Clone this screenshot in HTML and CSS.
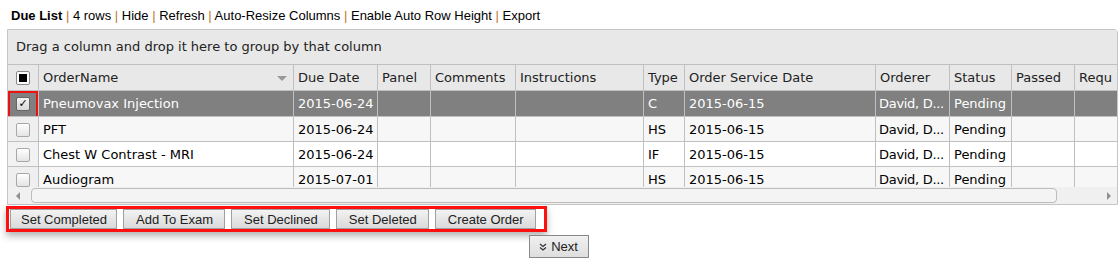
FILE: index.html
```html
<!DOCTYPE html>
<html>

<head>
    <meta charset="UTF-8">
    <title>Due List</title>
    <link rel="stylesheet" href="styles.css">
</head>

<body>
    <div class="page">
        <div class="toolbar">
            <b>Due List</b> <span class="sep">|</span> 4 rows <span class="sep">|</span> Hide <span class="sep">|</span>
            Refresh <span class="sep">|</span> Auto-Resize Columns <span class="sep">|</span> Enable Auto Row Height
            <span class="sep">|</span> Export
        </div>

        <div class="grid">
            <div class="group-panel">Drag a column and drop it here to group by that column</div>
            <div class="grid-content">
                <table class="grid-table">
                    <thead>
                        <tr>
                            <th class="col-chk"><span class="chk chk-all"></span></th>
                            <th class="col-name">OrderName<span class="sort-arrow"></span></th>
                            <th class="col-due">Due Date</th>
                            <th class="col-panel">Panel</th>
                            <th class="col-comments">Comments</th>
                            <th class="col-instr">Instructions</th>
                            <th class="col-type">Type</th>
                            <th class="col-osd">Order Service Date</th>
                            <th class="col-orderer">Orderer</th>
                            <th class="col-status">Status</th>
                            <th class="col-passed">Passed</th>
                            <th class="col-req">Requ</th>
                        </tr>
                    </thead>
                    <tbody>
                        <tr class="row-selected">
                            <td class="cell-chk">
                                <span class="chk chk-on">&#10003;</span>
                                <span class="highlight"></span>
                            </td>
                            <td>Pneumovax Injection</td>
                            <td>2015-06-24</td>
                            <td></td>
                            <td></td>
                            <td></td>
                            <td>C</td>
                            <td>2015-06-15</td>
                            <td class="cell-orderer">David, D...</td>
                            <td>Pending</td>
                            <td></td>
                            <td></td>
                        </tr>
                        <tr class="row-alt">
                            <td class="cell-chk"><span class="chk"></span></td>
                            <td>PFT</td>
                            <td>2015-06-24</td>
                            <td></td>
                            <td></td>
                            <td></td>
                            <td>HS</td>
                            <td>2015-06-15</td>
                            <td class="cell-orderer">David, D...</td>
                            <td>Pending</td>
                            <td></td>
                            <td></td>
                        </tr>
                        <tr>
                            <td class="cell-chk"><span class="chk"></span></td>
                            <td>Chest W Contrast - MRI</td>
                            <td>2015-06-24</td>
                            <td></td>
                            <td></td>
                            <td></td>
                            <td>IF</td>
                            <td>2015-06-15</td>
                            <td class="cell-orderer">David, D...</td>
                            <td>Pending</td>
                            <td></td>
                            <td></td>
                        </tr>
                        <tr class="row-alt">
                            <td class="cell-chk"><span class="chk"></span></td>
                            <td>Audiogram</td>
                            <td>2015-07-01</td>
                            <td></td>
                            <td></td>
                            <td></td>
                            <td>HS</td>
                            <td>2015-06-15</td>
                            <td class="cell-orderer">David, D...</td>
                            <td>Pending</td>
                            <td></td>
                            <td></td>
                        </tr>
                    </tbody>
                </table>
            </div>
            <div class="hscroll">
                <span class="arrow arrow-left"></span>
                <div class="thumb"></div>
                <span class="arrow arrow-right"></span>
            </div>
        </div>

        <div class="actions">
            <div class="action-box">
                <button class="btn">Set Completed</button>
                <button class="btn">Add To Exam</button>
                <button class="btn">Set Declined</button>
                <button class="btn">Set Deleted</button>
                <button class="btn">Create Order</button>
            </div>
        </div>

        <div class="pager">
            <button class="btn btn-next">
                <svg width="8" height="8" viewBox="0 0 8 8">
                    <polyline points="1,1 4,3.5 7,1" fill="none" stroke="#333" stroke-width="1.2" />
                    <polyline points="1,4.5 4,7 7,4.5" fill="none" stroke="#333" stroke-width="1.2" />
                </svg>
                Next
            </button>
        </div>
    </div>
</body>

</html>
```

FILE: styles.css
```css
body {
    margin: 0;
    padding: 0;
    background: #fff;
    color: #000;
    font-family: 'Liberation Sans', Arial, sans-serif;
    font-size: 13px;
}

.page {
    width: 1118px;
}

.toolbar {
    padding: 8px 0 0 11px;
    height: 16px;
    line-height: 16px;
    margin-bottom: 5px;
    white-space: nowrap;
}

.toolbar b {
    font-weight: bold;
}

.sep {
    color: #c0782b;
}

/* Grid */
.grid {
    box-sizing: border-box;
    width: 1111px;
    margin-left: 7px;
    border: 1px solid #c5c5c5;
    border-top-right-radius: 4px;
    overflow: hidden;
    font-family: 'DejaVu Sans', Verdana, sans-serif;
    font-size: 13px;
    color: #222;
}

.group-panel {
    height: 34px;
    line-height: 34px;
    padding-left: 8px;
    background: #e8e8e8;
    border-bottom: 1px solid #c0c0c0;
}

.grid-content {
    height: 122px;
    overflow: hidden;
}

.grid-table {
    table-layout: fixed;
    width: 1167px;
    border-collapse: separate;
    border-spacing: 0;
}

.grid-table th,
.grid-table td {
    box-sizing: border-box;
    padding: 0 3px 0 4px;
    border-right: 1px solid #c0c0c0;
    border-bottom: 1px solid #c0c0c0;
    white-space: nowrap;
    overflow: hidden;
    text-align: left;
    vertical-align: middle;
}

.grid-table th {
    height: 26px;
    background: #e8e8e8;
    font-weight: normal;
    color: #222;
}

.grid-table td {
    height: 25px;
    color: #000;
}

.grid-table tbody tr:first-child td {
    height: 26px;
}

.grid-table td.cell-orderer {
    padding: 0 0 0 3px;
    letter-spacing: -0.3px;
}

.col-chk { width: 31px; }
.col-name { width: 255px; position: relative; }
.col-due { width: 84px; }
.col-panel { width: 53px; }
.col-comments { width: 85px; }
.col-instr { width: 128px; }
.col-type { width: 41px; }
.col-osd { width: 191px; }
.col-orderer { width: 74px; }
.col-status { width: 62px; }
.col-passed { width: 63px; }
.col-req { width: 100px; }

.grid-table th.col-chk,
.grid-table td.cell-chk {
    padding: 0;
    text-align: center;
}

.cell-chk {
    background: #f2f2f2;
    position: relative;
}

.row-alt td {
    background: #f7f7f7;
}

.row-alt td.cell-chk {
    background: #efefef;
}

.row-selected td,
.row-selected td.cell-chk {
    background: #808080;
    color: #fff;
}

.sort-arrow {
    position: absolute;
    right: 6px;
    top: 11px;
    border-left: 5px solid transparent;
    border-right: 5px solid transparent;
    border-top: 5px solid #999;
}

/* Checkboxes */
.chk {
    display: inline-block;
    box-sizing: border-box;
    width: 14px;
    height: 14px;
    border: 1px solid #a8a8a8;
    border-radius: 2px;
    background: linear-gradient(#ffffff, #e4e4e4);
    vertical-align: middle;
    position: relative;
    font-size: 11px;
    line-height: 12px;
    text-align: center;
    color: #000;
}

.chk-all {
    background: #fff;
    border-color: #888;
}

.chk-all::after {
    content: '';
    position: absolute;
    left: 2px;
    top: 2px;
    width: 8px;
    height: 8px;
    background: #000;
}

.chk-on {
    background: linear-gradient(#f4f4f4, #d8d8d8);
    border-color: #666;
    font-family: 'DejaVu Sans', sans-serif;
    font-weight: bold;
}

.highlight {
    position: absolute;
    left: -1px;
    top: -1px;
    right: -1px;
    bottom: -3px;
    border: 3px solid #ee1111;
    box-shadow: 0 4px 6px rgba(0, 0, 0, 0.35);
}

/* Horizontal scrollbar */
.hscroll {
    height: 17px;
    background: #f0f0f0;
    display: flex;
    align-items: center;
    padding: 0 6px 0 5px;
    gap: 6px;
}

.arrow {
    width: 0;
    height: 0;
    border-top: 4px solid transparent;
    border-bottom: 4px solid transparent;
}

.arrow-left {
    border-right: 4px solid #909090;
    margin-left: 3px;
}

.arrow-right {
    border-left: 4px solid #909090;
    margin-left: 44px;
}

.thumb {
    box-sizing: border-box;
    width: 1030px;
    height: 15px;
    margin-left: 5px;
    border: 1px solid #bcbcbc;
    border-radius: 4px;
    background: #f4f4f4;
}

/* Action buttons */
.actions {
    margin: 1px 0 0 6px;
}

.action-box {
    display: inline-flex;
    gap: 6px;
    padding: 0 8px 0 1px;
    border: 3px solid #ff1010;
    box-shadow: 0 4px 7px rgba(0, 0, 0, 0.3);
}

.btn {
    height: 20px;
    padding: 0 11px 0 12px;
    font-family: 'Liberation Sans', Arial, sans-serif;
    font-size: 13px;
    color: #222;
    background: linear-gradient(#f2f2f2, #dadada);
    border: 1px solid #a0a0a0;
    border-radius: 0;
    cursor: pointer;
}

.action-box .btn:first-child {
    padding: 0 9px 0 10px;
}

.pager {
    display: flex;
    justify-content: center;
    margin-top: 3px;
}

.btn-next {
    height: 23px;
    padding: 0 10px 0 9px;
    display: flex;
    align-items: center;
    gap: 4px;
    border-color: #888;
    background: linear-gradient(#f0f0f0, #dedede);
}
```
